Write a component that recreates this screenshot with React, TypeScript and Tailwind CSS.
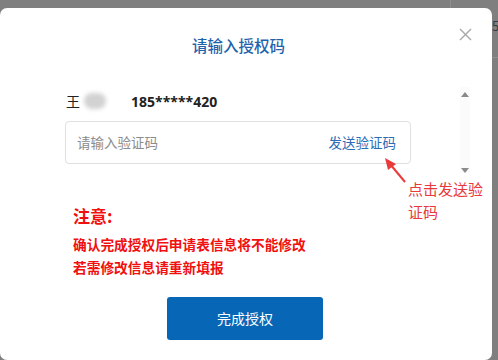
import React from "react";

export default function App() {
  return (
    <div
      className="relative w-[498px] h-[360px] overflow-hidden bg-[#7f7f7f]"
      style={{ fontFamily: '"Noto Sans CJK SC", "Noto Sans", sans-serif' }}
    >
      {/* dimmed page behind the dialog */}
      <div className="absolute left-[450px] top-0 h-[8px] w-px bg-[#8e8e8e]" />
      <div className="absolute left-[492px] top-[18px] text-[13px] leading-[16px] text-[#3a3a3a]">5</div>
      <div className="absolute left-[492px] top-[57px] h-px w-[6px] bg-[#909090]" />

      <div className="relative mt-[8px] h-[352px] w-[492px] rounded-[7px] bg-white">
        <button className="absolute right-[20px] top-[20px] text-[#a9a9a9]" aria-label="close">
          <svg width="13" height="13" viewBox="0 0 13 13" fill="none" stroke="currentColor" strokeWidth="1.4">
            <line x1="1" y1="1" x2="12" y2="12" />
            <line x1="12" y1="1" x2="1" y2="12" />
          </svg>
        </button>

        <div className="flex flex-col">
          <h2 className="pt-[26px] pl-[192px] text-[15.5px] leading-[22px] font-medium text-[#1f63ac]">请输入授权码</h2>

          <div className="mt-[31px] flex">
            <div className="w-[346px] ml-[65px]">
              <div className="flex h-[28px] items-center text-[14px] font-bold text-[#222]">
                <span className="ml-[1px] font-normal">王</span>
                <span className="ml-[4px] h-[16px] w-[22px] rounded-full bg-[#d2d2d2] blur-[2px]" />
                <span className="ml-[25px]" style={{ fontFamily: '"Open Sans", "Noto Sans", sans-serif' }}>
                  185*****420
                </span>
              </div>
              <div className="mt-[6px] flex h-[43px] items-center justify-between rounded-[4px] border border-[#e0e0e0] px-[11px] text-[13.5px]">
                <span className="text-[#8c8c8c]">请输入验证码</span>
                <span className="mr-[3px] text-[#2a6db5]">发送验证码</span>
              </div>
            </div>
            <div className="ml-[49px] flex h-[86px] w-[10px] flex-col items-center justify-between bg-[#fbfbfb] pt-[5px]">
              <svg width="8" height="5" viewBox="0 0 8 5"><polygon points="4,0 8,5 0,5" fill="#8a8a8a" /></svg>
              <svg width="8" height="5" viewBox="0 0 8 5"><polygon points="0,0 8,0 4,5" fill="#8a8a8a" /></svg>
            </div>
          </div>

          <div className="mt-[31px] pl-[73px] text-[#f01010]">
            <div className="text-[17px] leading-[24px] font-bold">注意:</div>
            <div className="mt-[5px] text-[13.7px] leading-[23px] font-bold">确认完成授权后申请表信息将不能修改</div>
            <div className="text-[13.7px] leading-[23px] font-bold">若需修改信息请重新填报</div>
          </div>

          <div className="mt-[18px] flex justify-center">
            <button className="ml-[-2px] h-[43px] w-[156px] rounded-[3px] bg-[#0767b6] text-[14px] text-white">完成授权</button>
          </div>
        </div>

        {/* annotation */}
        <svg className="absolute left-[383px] top-[148px]" width="26" height="30" viewBox="0 0 26 30">
          <line x1="22" y1="26" x2="7" y2="8" stroke="#ea3b3b" strokeWidth="2" />
          <polygon points="2,2 13,8 5,14" fill="#ea3b3b" />
        </svg>
        <div className="absolute left-[408px] top-[169px] text-[15px] leading-[23px] text-[#e8393c]">
          <div>点击发送验</div>
          <div>证码</div>
        </div>
      </div>
    </div>
  );
}
